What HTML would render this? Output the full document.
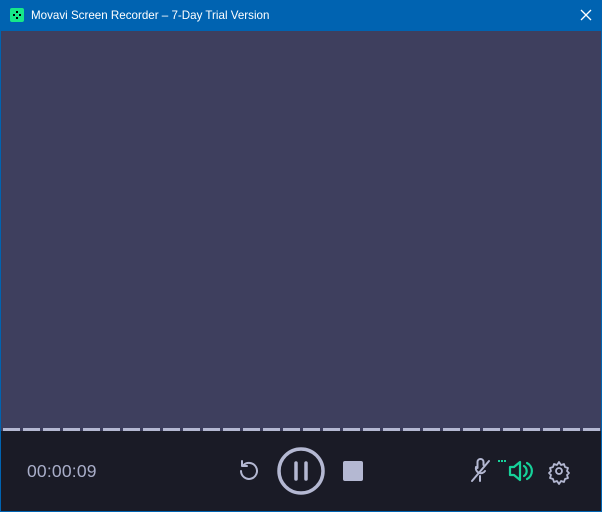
<!DOCTYPE html>
<html><head><meta charset="utf-8"><style>
html,body{margin:0;padding:0}
body{width:602px;height:512px;position:relative;overflow:hidden;background:#0063b1;font-family:"Liberation Sans",sans-serif}
.title{position:absolute;left:0;top:0;width:602px;height:31px;background:#0063b1;color:#fff;font-size:11.6px}
.title .t{position:absolute;left:31px;top:9px}
.logo{position:absolute;left:10px;top:8px;width:14px;height:14px;background:#16e888;border-radius:2px}
.close{position:absolute;left:580px;top:9px}
.main{position:absolute;left:1px;top:31px;width:600px;height:396px;background:#3e3f5e}
.bar{position:absolute;left:1px;top:427px;width:600px;height:84px;background:#1a1b26}
.dash{position:absolute;left:1px;top:427px;width:600px;height:4px;background:#3e3f5e}
.dash i{position:absolute;top:1px;height:3px;width:17px;background:#b4b8d2}
.time{position:absolute;left:27px;top:461px;color:#a9aec9;font-size:17.5px;letter-spacing:0.2px}
</style></head><body>
<div class="title"><div class="logo"><svg width="14" height="14"><g fill="#000"><rect x="6" y="3" width="2" height="2"/><rect x="3" y="6" width="2" height="2"/><rect x="9" y="6" width="2" height="2"/><rect x="6" y="9" width="2" height="2"/></g></svg></div><span class="t">Movavi Screen Recorder – 7-Day Trial Version</span>
<svg class="close" width="12" height="12"><path d="M1 1L11 11M11 1L1 11" stroke="#fff" stroke-width="1.3"/></svg></div>
<div class="main"></div>
<div class="bar"></div>
<div class="dash" id="d"></div>
<div class="time">00:00:09</div>
<svg style="position:absolute;left:0;top:440px" width="602" height="60">
<g fill="none" stroke="#b4b8d2" stroke-width="2" stroke-linecap="round" stroke-linejoin="round">
<path d="M243.3 25.3 A8 8 0 1 1 241 31"/>
<path d="M242 21 V26 H247"/>
<circle cx="301" cy="31" r="22" stroke-width="3.5"/>
<path d="M296 23V39M306 23V39" stroke-width="3.5"/>
<path d="M472 41L489 21"/>
<path d="M476 27a5 5 0 0 0 9 4M480 36v5M477.5 28v-6a3 3 0 0 1 6 0v3"/>
<path d="M559 22l2 3 3-1 1 3 3 1-1 3 2 2-2 2 1 3-3 1-1 3-3-1-2 3-2-3-3 1-1-3-3-1 1-3-2-2 2-2-1-3 3-1 1-3 3 1z" stroke-width="1.8"/>
<circle cx="559" cy="31" r="3" stroke-width="1.8"/>
</g>
<rect x="343" y="21" width="20" height="20" rx="2" fill="#b4b8d2"/>
<g fill="none" stroke="#16d29a" stroke-width="2.2" stroke-linejoin="round" stroke-linecap="round">
<path d="M510 27h4l6-5v18l-6-5h-4z"/><path d="M524 26a6 6 0 0 1 0 10M527 23a9 9 0 0 1 0 16"/>
</g>
<g fill="#16d29a"><rect x="498" y="20" width="2" height="2"/><rect x="501" y="20" width="2" height="2"/><rect x="504" y="20" width="2" height="2"/></g>
</svg>
<script>
var d=document.getElementById('d');for(var x=2;x<600;x+=20){var i=document.createElement('i');i.style.left=x+'px';d.appendChild(i);}
</script>
</body></html>
